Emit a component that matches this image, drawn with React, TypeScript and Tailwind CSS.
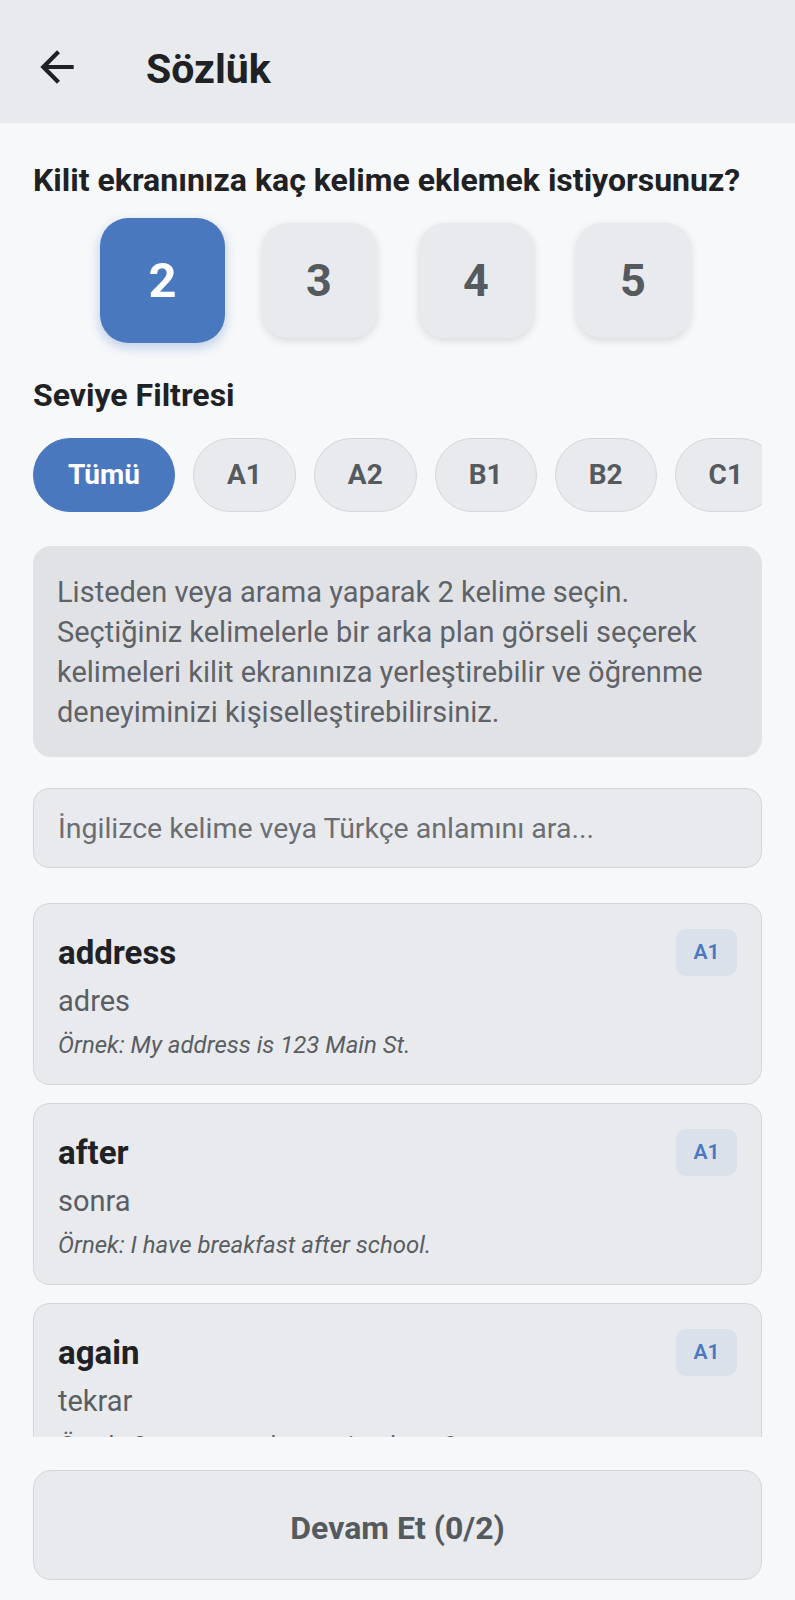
import { useState } from "react"

const levels = ["Tümü", "A1", "A2", "B1", "B2", "C1", "C2"]

const words = [
  { word: "address", meaning: "adres", example: "My address is 123 Main St.", level: "A1" },
  { word: "after", meaning: "sonra", example: "I have breakfast after school.", level: "A1" },
  { word: "again", meaning: "tekrar", example: "Can you say that again, please?", level: "A1" },
]

export default function App() {
  const [count, setCount] = useState(2)
  const [level, setLevel] = useState("Tümü")

  return (
    <div className="h-[1600px] flex flex-col bg-[#f7f8fa] font-['Roboto','Liberation_Sans',sans-serif] text-[#202124]">
      {/* Header */}
      <header className="h-[123px] shrink-0 bg-[#e8eaed] flex items-center pt-[11px]">
        <button className="ml-[32px] text-[#202124]">
          <svg width="50" height="50" viewBox="0 0 24 24" fill="currentColor">
            <path d="M20 11H7.83l5.59-5.59L12 4l-8 8 8 8 1.41-1.41L7.83 13H20v-2z" />
          </svg>
        </button>
        <h1 className="ml-[64px] mt-[4px] text-[41px] font-bold leading-[48px]">Sözlük</h1>
      </header>

      <main className="flex-1 min-h-0 flex flex-col px-[33px]">
        <h2 className="mt-[39px] text-[32px] font-bold leading-[36px]">
          Kilit ekranınıza kaç kelime eklemek istiyorsunuz?
        </h2>

        {/* Word count */}
        <div className="mt-[25px] flex justify-center gap-[42px]">
          {[2, 3, 4, 5].map((n) => (
            <button
              key={n}
              onClick={() => setCount(n)}
              className={
                n === count
                  ? "w-[115px] h-[115px] rounded-[26px] bg-[#4a78bf] text-white text-[45px] font-bold scale-[1.087] shadow-[0_4px_10px_rgba(74,120,191,0.3)]"
                  : "w-[115px] h-[115px] rounded-[26px] bg-[#e8eaed] text-[#555a5f] text-[45px] font-bold shadow-[0_3px_8px_rgba(0,0,0,0.12)]"
              }
            >
              {n}
            </button>
          ))}
        </div>

        <h3 className="mt-[40px] text-[32px] font-bold leading-[34px]">Seviye Filtresi</h3>

        {/* Level filter */}
        <div className="mt-[26px] flex gap-[18px] overflow-hidden">
          {levels.map((l) => (
            <button
              key={l}
              onClick={() => setLevel(l)}
              className={
                l === level
                  ? "shrink-0 h-[74px] px-[34px] rounded-full border-[1.5px] border-[#4a78bf] bg-[#4a78bf] text-white text-[28px] font-bold"
                  : "shrink-0 h-[74px] px-[33px] rounded-full border-[1.5px] border-[#d3d6da] bg-[#e8eaed] text-[#555a5f] text-[28px] font-bold"
              }
            >
              {l}
            </button>
          ))}
        </div>

        {/* Info */}
        <div className="mt-[34px] rounded-[18px] bg-[#e0e2e6] px-[24px] pt-[26px] pb-[25px] text-[29px] leading-[40px] text-[#5f6368]">
          Listeden veya arama yaparak {count} kelime seçin. Seçtiğiniz kelimelerle bir arka plan görseli seçerek
          kelimeleri kilit ekranınıza yerleştirebilir ve öğrenme deneyiminizi kişiselleştirebilirsiniz.
        </div>

        {/* Search */}
        <input
          className="mt-[31px] h-[80px] shrink-0 rounded-[16px] border-[1.5px] border-[#d3d6da] bg-[#e8eaed] px-[24px] text-[28.5px] text-[#202124] placeholder:text-[#6b6f74] outline-none"
          placeholder="İngilizce kelime veya Türkçe anlamını ara..."
        />

        {/* Word list */}
        <div className="mt-[35px] flex-1 min-h-0 overflow-hidden">
          <div className="flex flex-col gap-[18px]">
            {words.map((w) => (
              <div
                key={w.word}
                className="h-[182px] shrink-0 rounded-[16px] border-[1.5px] border-[#d3d6da] bg-[#e8eaed] px-[24px] pt-[25px]"
              >
                <div className="flex items-center justify-between">
                  <span className="text-[33px] font-bold leading-[34px]">{w.word}</span>
                  <span className="h-[47px] w-[61px] rounded-[10px] bg-[#dbe1ea] flex items-center justify-center text-[21px] font-semibold text-[#4a78bf]">
                    {w.level}
                  </span>
                </div>
                <p className="mt-[8px] text-[29px] leading-[34px] text-[#5a5e63]">{w.meaning}</p>
                <p className="mt-[13px] text-[24px] leading-[28px] italic text-[#5a5e63]">Örnek: {w.example}</p>
              </div>
            ))}
          </div>
        </div>

        <div className="pt-[33px] pb-[20px] shrink-0">
          <button className="w-full h-[110px] pt-[6px] rounded-[18px] border-[1.5px] border-[#d3d6da] bg-[#e8eaed] text-[32px] font-bold text-[#555a5f]">
            Devam Et (0/{count})
          </button>
        </div>
      </main>
    </div>
  )
}
